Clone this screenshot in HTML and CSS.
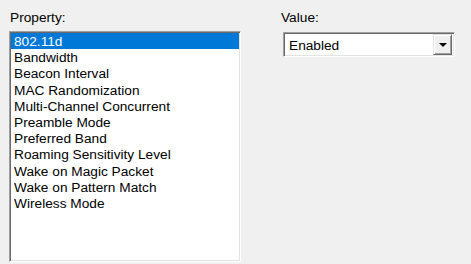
FILE: index.html
```html
<!DOCTYPE html>
<html>
<head>
    <meta name="viewport" content="width=device-width, initial-scale=1.0">
    <title>Advanced Properties</title>
    <link rel="stylesheet" href="styles.css">
</head>
<body>
    <div class="page">
        <div class="prop-col">
            <div class="label">Property:</div>
            <ul class="listbox">
                <li class="selected">802.11d</li>
                <li>Bandwidth</li>
                <li>Beacon Interval</li>
                <li>MAC Randomization</li>
                <li>Multi-Channel Concurrent</li>
                <li>Preamble Mode</li>
                <li>Preferred Band</li>
                <li>Roaming Sensitivity Level</li>
                <li>Wake on Magic Packet</li>
                <li>Wake on Pattern Match</li>
                <li>Wireless Mode</li>
            </ul>
        </div>
        <div class="value-col">
            <div class="label">Value:</div>
            <div class="combo">
                <span class="combo-text">Enabled</span>
                <span class="combo-btn"><span class="arrow"></span></span>
            </div>
        </div>
    </div>
</body>
</html>
```

FILE: styles.css
```css
body {
    margin: 0;
    background: #f0f0f0;
    font-family: "Liberation Sans", Arial, sans-serif;
    font-size: 13.7px;
    color: #000;
}

.page {
    display: flex;
    padding: 10px 0 0 9px;
}

.label {
    height: 21px;
    line-height: 15px;
    padding-left: 1px;
}

.prop-col {
    width: 232px;
}

.listbox {
    list-style: none;
    margin: 0;
    padding: 1px 0 0 1px;
    height: 231px;
    box-sizing: border-box;
    background: #fff;
    border: 1px solid;
    border-color: #a0a0a0 #fff #fff #a0a0a0;
    box-shadow: inset 1px 1px #696969, inset -1px -1px #e3e3e3;
}

.listbox li {
    height: 15.2px;
    padding-top: 1px;
    line-height: 16px;
    padding-left: 3px;
    margin-right: 1px;
    white-space: nowrap;
}

.listbox li.selected {
    background: #0078d7;
    color: #fff;
}

.value-col {
    margin-left: 40px;
    width: 174px;
}

.value-col .label {
    padding-left: 0;
}

.combo {
    display: flex;
    align-items: center;
    margin: 1px 0 0 2px;
    height: 25px;
    box-sizing: border-box;
    background: #fff;
    border: 1px solid;
    border-color: #a0a0a0 #fff #fff #a0a0a0;
    box-shadow: inset 1px 1px #696969, inset -1px -1px #e3e3e3;
    padding: 2px;
}

.combo-text {
    flex: 1;
    padding-left: 3px;
    padding-top: 1px;
}

.combo-btn {
    width: 19px;
    height: 21px;
    box-sizing: border-box;
    background: #f0f0f0;
    border: 1px solid;
    border-color: #e3e3e3 #696969 #696969 #e3e3e3;
    box-shadow: inset 1px 1px #fff, inset -1px -1px #a0a0a0;
    display: flex;
    align-items: center;
    justify-content: center;
}

.arrow {
    width: 0;
    height: 0;
    border-left: 4px solid transparent;
    border-right: 4px solid transparent;
    border-top: 4px solid #000;
    margin-top: 1px;
}
```
